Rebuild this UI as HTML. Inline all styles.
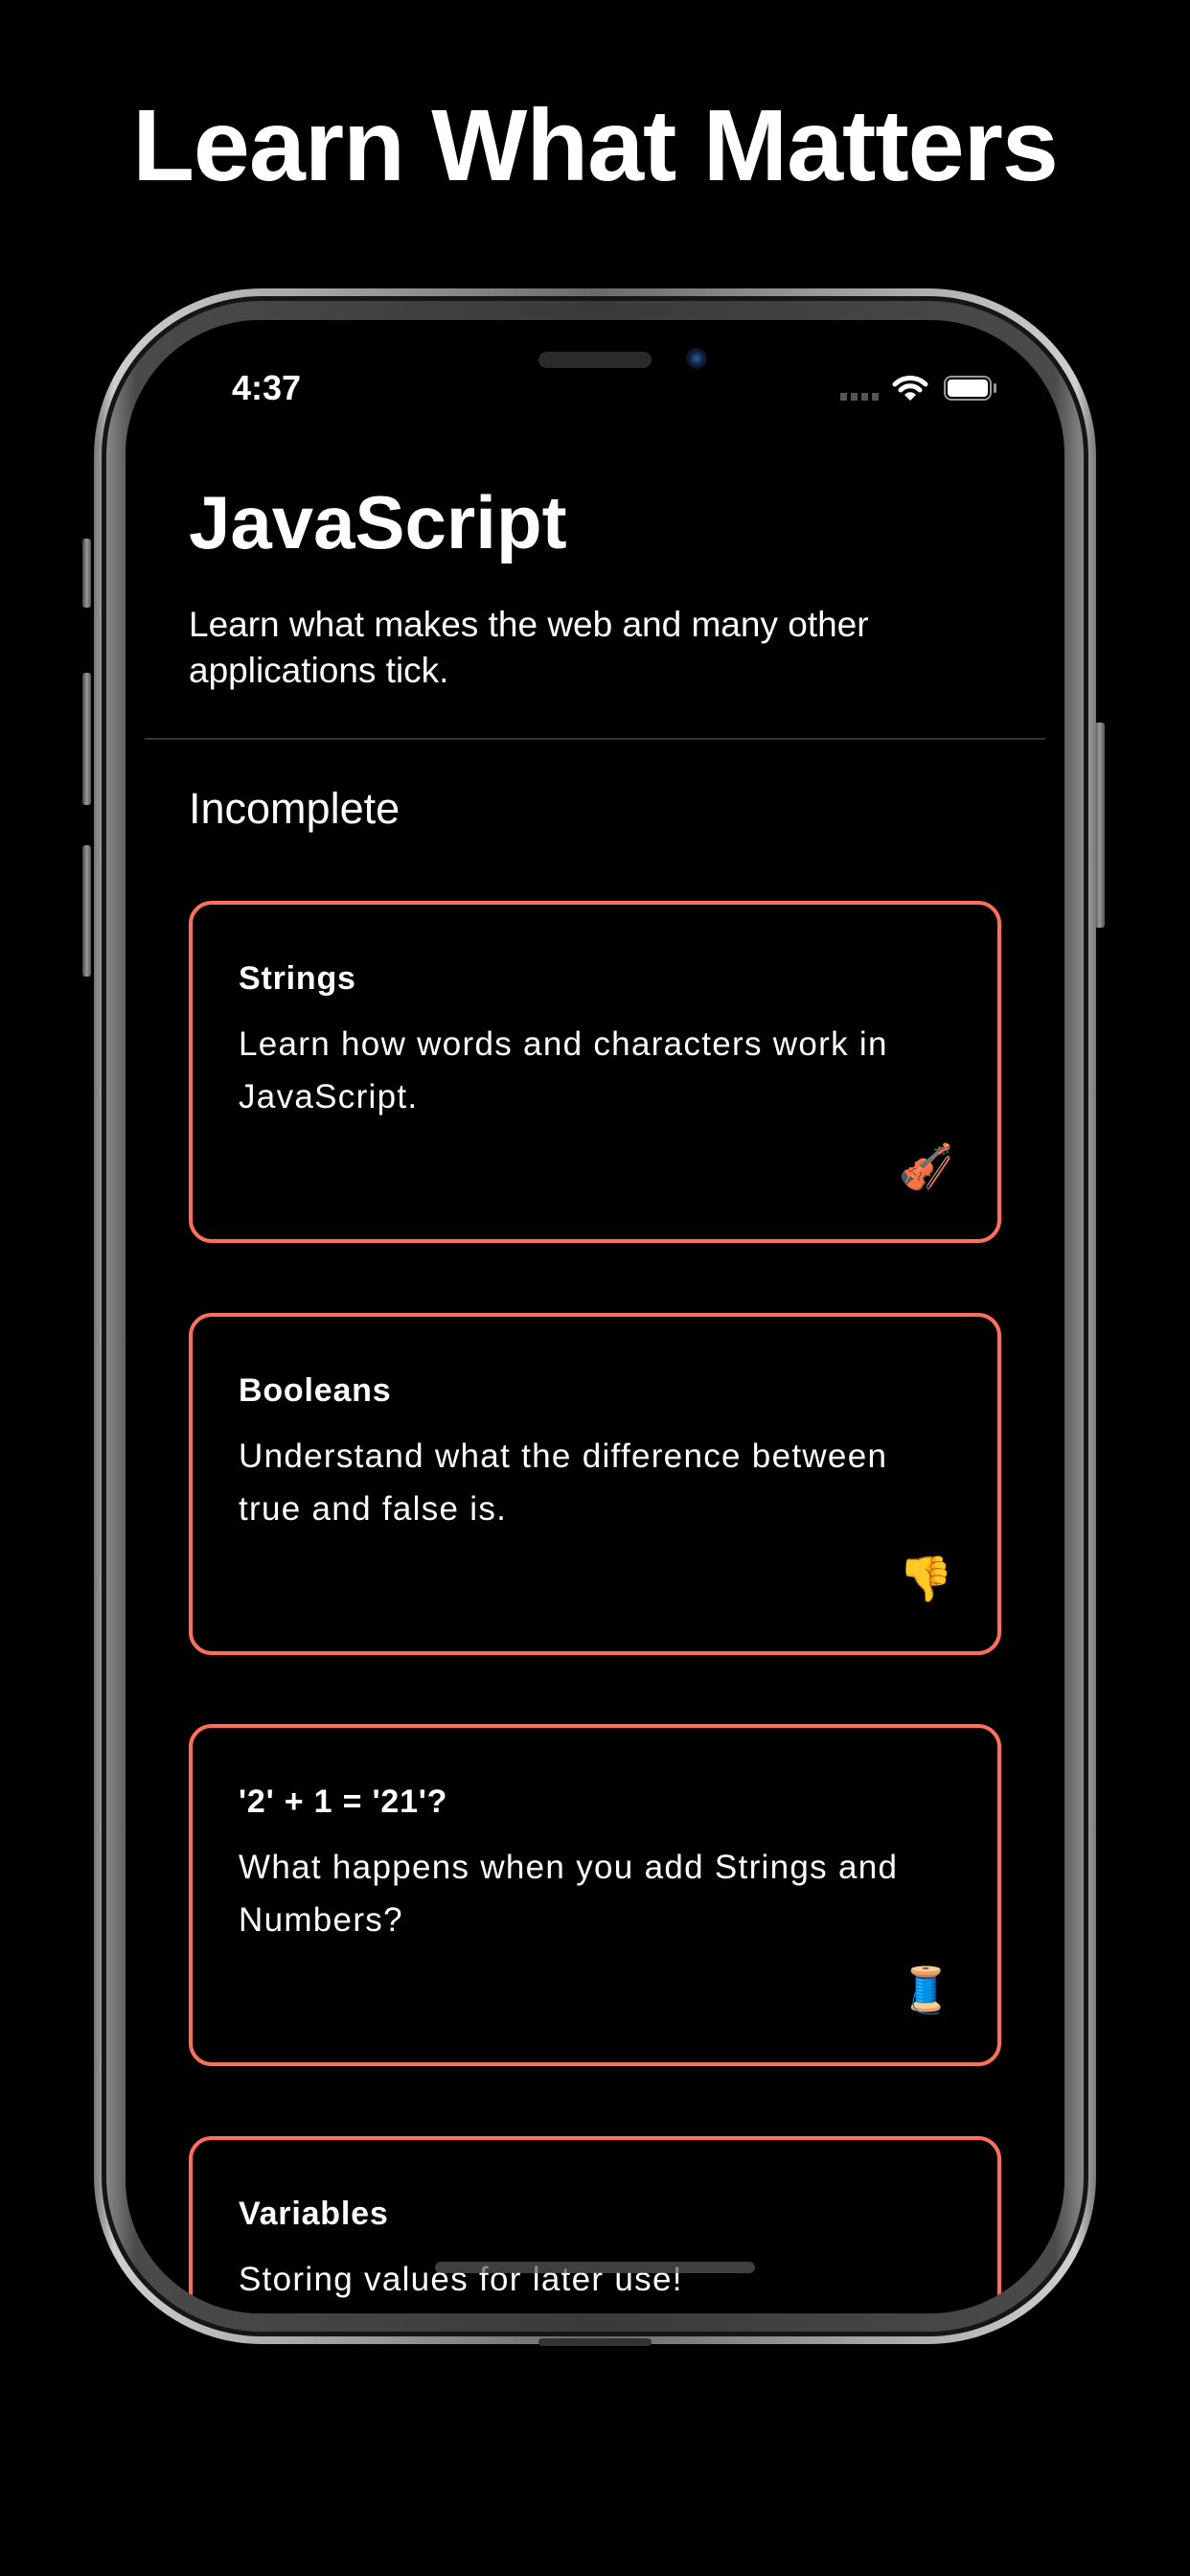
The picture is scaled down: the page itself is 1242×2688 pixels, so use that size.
<!DOCTYPE html>
<html><head><meta charset="utf-8"><style>
*{margin:0;padding:0;box-sizing:border-box}
body{width:1242px;height:2688px;background:#000;position:relative;overflow:hidden;font-family:"Liberation Sans",sans-serif;color:#fff}
.abs{position:absolute}
h1{position:absolute;left:0;width:1242px;top:92px;text-align:center;font-size:106px;font-weight:bold;letter-spacing:-1px;line-height:120px}
.rim{left:98px;top:301px;width:1046px;height:2145px;border-radius:175px;background:linear-gradient(90deg,#777,#cfcfcf 2%,#6a6a6a 50%,#cfcfcf 98%,#777)}
.rim2{left:106px;top:309px;width:1030px;height:2129px;border-radius:167px;background:#151515}
.rim3{left:111px;top:314px;width:1020px;height:2119px;border-radius:162px;background:linear-gradient(90deg,#888,#4a4a4a 3%,#3a3a3a 50%,#4a4a4a 97%,#888)}
.screen{left:131px;top:334px;width:980px;height:2080px;border-radius:140px;background:#000;overflow:hidden}
.btn{background:linear-gradient(90deg,#444,#999,#555);border-radius:3px}
.card{position:absolute;left:66px;width:848px;border:4px solid #ff6f5c;border-radius:24px}
.ct{position:absolute;left:48px;top:58px;font-size:34px;font-weight:bold;letter-spacing:.8px}
.cd{position:absolute;left:48px;top:118px;font-size:35px;line-height:55px;letter-spacing:1.3px;width:725px}
.em{position:absolute;right:46px;top:246px;font-size:46px}
</style></head><body>
<h1>Learn What Matters</h1>
<div class="abs btn" style="left:86px;top:562px;width:9px;height:72px"></div>
<div class="abs btn" style="left:86px;top:702px;width:9px;height:138px"></div>
<div class="abs btn" style="left:86px;top:882px;width:9px;height:137px"></div>
<div class="abs btn" style="left:1142px;top:754px;width:11px;height:214px"></div>
<div class="abs rim"></div>
<div class="abs rim2"></div>
<div class="abs rim3"></div>
<div class="abs" style="left:562px;top:2440px;width:118px;height:8px;background:#333;border-radius:4px"></div>
<div class="abs screen">
  <div class="abs" style="left:431px;top:33px;width:118px;height:17px;background:#2a2a2a;border-radius:9px"></div>
  <div class="abs" style="left:585px;top:29px;width:22px;height:22px;background:radial-gradient(circle,#2d5fa0 0,#0c2140 45%,#111 70%);border-radius:50%"></div>
  <div class="abs" style="left:111px;top:50px;font-size:36px;font-weight:bold">4:37</div>
  <div class="abs" style="left:746px;top:76px;width:40px;height:8px;background:repeating-linear-gradient(90deg,#555 0 7px,transparent 7px 11px)"></div>
  <svg class="abs" style="left:800px;top:56px" width="38" height="30" viewBox="0 0 38 30"><path d="M3 11 A23 23 0 0 1 35 11" stroke="#fff" stroke-width="5" fill="none" stroke-linecap="round"/><path d="M9 17 A14 14 0 0 1 29 17" stroke="#fff" stroke-width="5" fill="none" stroke-linecap="round"/><path d="M19 28 L13 22 A8 8 0 0 1 25 22 Z" fill="#fff"/></svg>
  <div class="abs" style="left:854px;top:58px;width:50px;height:26px;border:2px solid #999;border-radius:8px;padding:2px"><div style="width:100%;height:100%;background:#fff;border-radius:4px"></div></div>
  <div class="abs" style="left:906px;top:66px;width:3px;height:10px;background:#999;border-radius:2px"></div>
  <div class="abs" style="left:66px;top:166px;font-size:78px;font-weight:bold">JavaScript</div>
  <div class="abs" style="left:66px;top:294px;font-size:37px;line-height:48px;width:820px">Learn what makes the web and many other applications tick.</div>
  <div class="abs" style="left:20px;top:436px;width:940px;height:2px;background:#333"></div>
  <div class="abs" style="left:66px;top:484px;font-size:45px">Incomplete</div>
  <div class="card" style="top:606px;height:357px"><div class="ct">Strings</div><div class="cd">Learn how words and characters work in JavaScript.</div><div class="em">🎻</div></div>
  <div class="card" style="top:1036px;height:357px"><div class="ct">Booleans</div><div class="cd">Understand what the difference between true and false is.</div><div class="em">👎</div></div>
  <div class="card" style="top:1465px;height:357px"><div class="ct">'2' + 1 = '21'?</div><div class="cd">What happens when you add Strings and Numbers?</div><div class="em">🧵</div></div>
  <div class="card" style="top:1895px;height:357px"><div class="ct">Variables</div><div class="cd">Storing values for later use!</div></div>
  <div class="abs" style="left:323px;top:2026px;width:334px;height:12px;background:rgba(90,90,90,.7);border-radius:6px"></div>
</div>
</body></html>
